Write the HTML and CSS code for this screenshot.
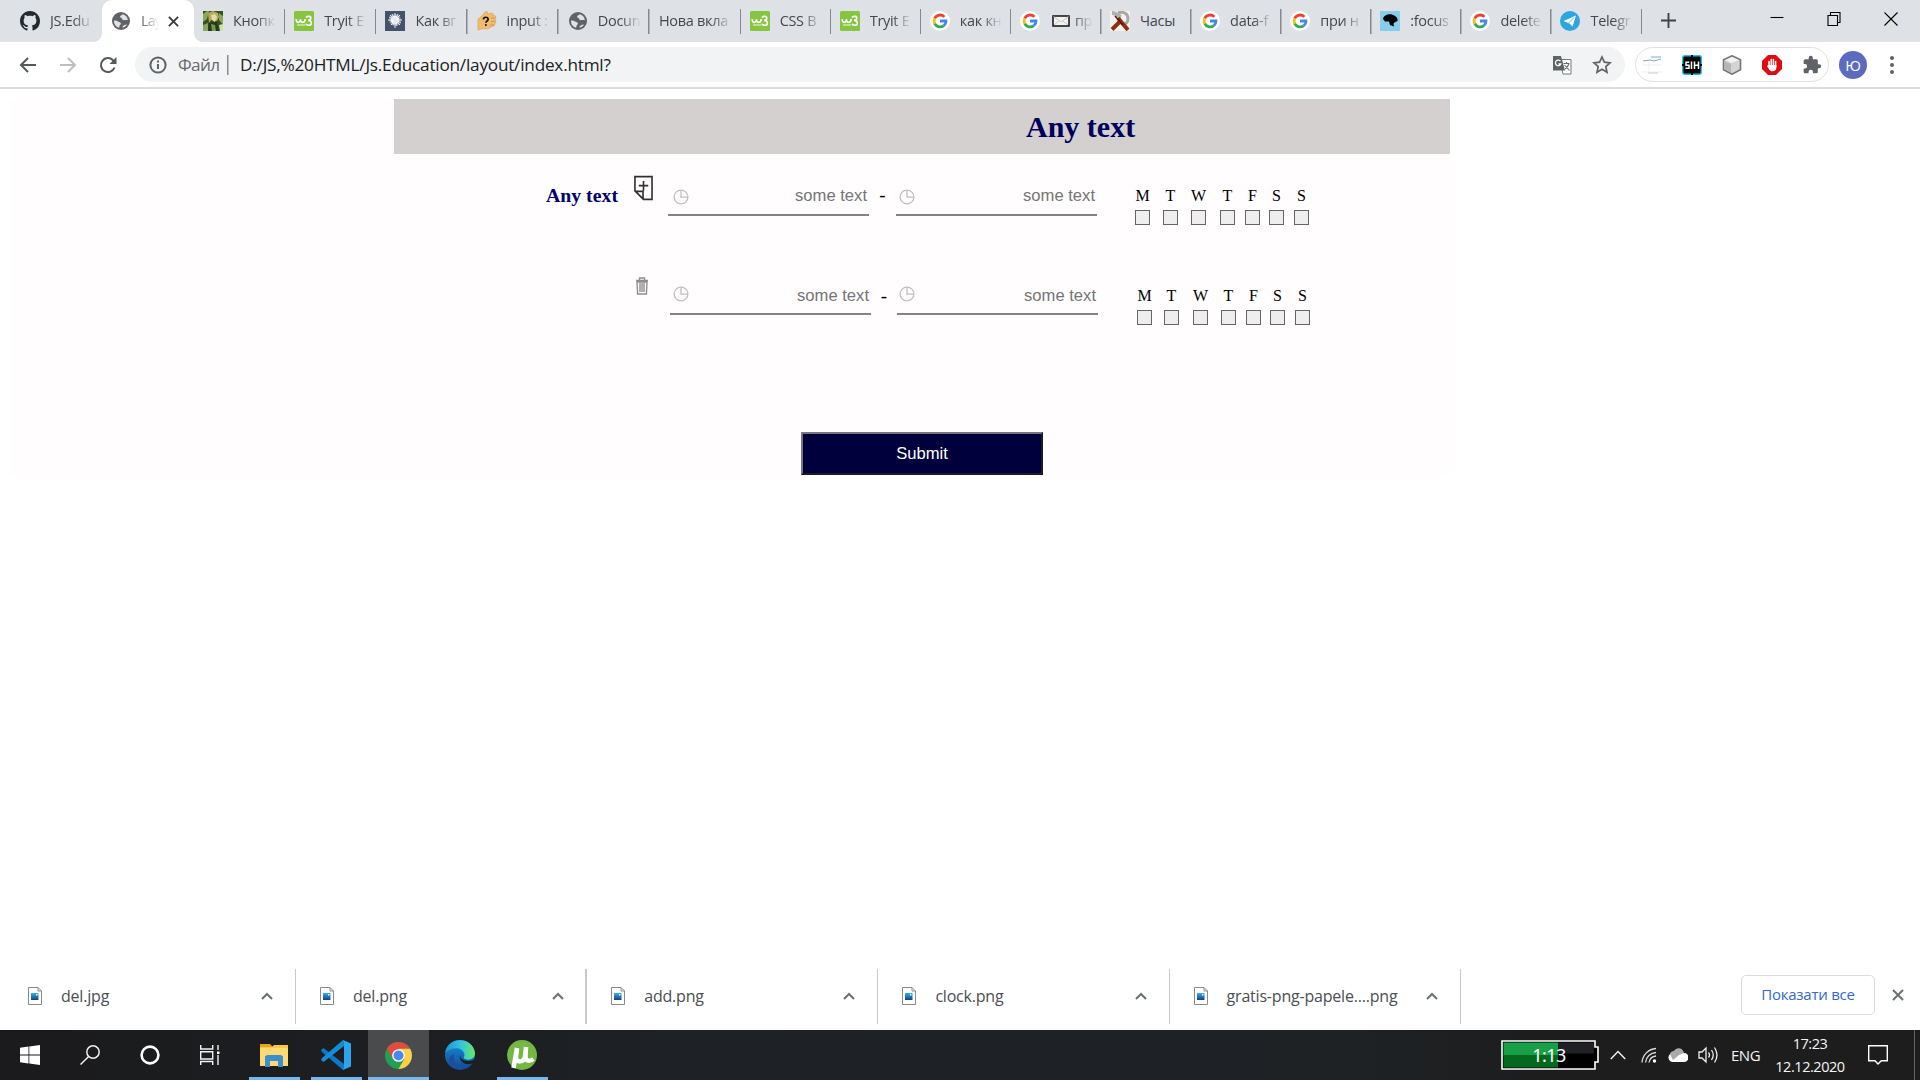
FILE: index.html
```html
<!DOCTYPE html>
<html lang="uk">
<head>
<meta charset="utf-8">
<title>Layout</title>
<link rel="stylesheet" href="styles.css">
</head>
<body>
<svg class="defs" aria-hidden="true">
  <defs>
    <linearGradient id="edgeA" x1="0" y1="0" x2="1" y2="0"><stop offset="0" stop-color="#1797d8"/><stop offset=".55" stop-color="#35c5dc"/><stop offset="1" stop-color="#66eb5c"/></linearGradient>
    <linearGradient id="edgeB" x1="0" y1="0" x2="0" y2="1"><stop offset="0" stop-color="#178fdf"/><stop offset="1" stop-color="#124a92"/></linearGradient>
    <linearGradient id="pic" x1="0" y1="0" x2="0" y2="1"><stop offset="0" stop-color="#36b0ea"/><stop offset="1" stop-color="#12407e"/></linearGradient>
  </defs>
  <symbol id="github" viewBox="0 0 16 16"><path fill="#24292e" d="M8 0C3.58 0 0 3.58 0 8c0 3.54 2.29 6.53 5.47 7.59.4.07.55-.17.55-.38 0-.19-.01-.82-.01-1.49-2.01.37-2.53-.49-2.69-.94-.09-.23-.48-.94-.82-1.13-.28-.15-.68-.52-.01-.53.63-.01 1.08.58 1.23.82.72 1.21 1.87.87 2.33.66.07-.52.28-.87.51-1.07-1.78-.2-3.64-.89-3.64-3.95 0-.87.31-1.59.82-2.15-.08-.2-.36-1.02.08-2.12 0 0 .67-.21 2.2.82.64-.18 1.32-.27 2-.27s1.36.09 2 .27c1.53-1.04 2.2-.82 2.2-.82.44 1.1.16 1.92.08 2.12.51.56.82 1.27.82 2.15 0 3.07-1.87 3.75-3.65 3.95.29.25.54.73.54 1.48 0 1.07-.01 1.93-.01 2.2 0 .21.15.46.55.38A8 8 0 0 0 16 8c0-4.42-3.58-8-8-8z"/></symbol>
  <symbol id="globe" viewBox="0 0 20 20"><circle cx="10" cy="10" r="9" fill="#5f6368"/><path fill="#dfe2e6" d="M11.500 3.200c-.5 1.200-2 1-2.400 2.400-.3 1.200 1 1.200 1.600 1.600.9.600.2 1.700 1.500 1.900 1.200.2 2.500-.6 4.600.2a7 7 0 0 0-5.300-6.100zM3 9.500c1.500 0 3 .2 4.200 1 1 .7 2.600.8 2.700 2 .1 1.400-1.200 1-1.300 2.300 0 .8-.2 1.400-.6 1.900A7.100 7.100 0 0 1 3 9.500zM11.500 15.500c.9-1.600 3-1.500 3.900-2.300l.4.900a7 7 0 0 1-4 2.700z"/></symbol>
  <symbol id="photo" viewBox="0 0 20 20"><path fill="#31541f" d="M0 0h20v20H0z"/><path fill="#8ca75a" d="M0 3l4-3h2L4 8 0 11zM16 2l4 3v9l-4-5zM0 14l5-2v8H0z"/><path fill="#b5aa60" d="M5 2l5-2 5 2 1 4-2 4-6-1-2 3z"/><path fill="#ead9a4" d="M8 4l4-1 2 3-2 5-3-2z"/><path fill="#26371c" d="M6 12l8-1 2 9H5z"/><path fill="#779650" d="M8 13l4 1 1 6H9z"/><path fill="#cee39c" d="M16 14l4-1v7h-3z"/></symbol>
  <symbol id="w3" viewBox="0 0 20 20"><rect width="20" height="20" rx="1.500" fill="#87c540"/><path fill="none" stroke="#fff" stroke-width="1.600" d="M2.200 8c0 4.500 4 4.500 4.300.3 0 4.200 4.500 4.200 4.700-.3M12 6.500c1-1.700 5-1.600 4.800.8-.1 1.500-1.500 2.100-2.800 2.100 2 0 3.500.8 3.400 2.700-.2 2.900-4.600 2.700-5.400.6"/><path stroke="#d9eec1" stroke-width="1.300" d="M3 14h8"/></symbol>
  <symbol id="burst" viewBox="0 0 20 20"><path fill="#46516a" d="M0 0h20v20H0z"/><circle cx="10" cy="9" r="6" fill="#8993a6"/><circle cx="10" cy="9" r="4.300" fill="#fff"/><path fill="none" stroke="#e4e8ef" stroke-width="1" d="M10 2v15M3 9h14M5 4l10 10M15 4L6 14M7 3l5 12M13 3L8 14M4 6l12 6"/></symbol>
  <symbol id="fist" viewBox="0 0 20 20"><path fill="#f0bd70" stroke="#d99a42" stroke-width=".6" d="M1 8l4-3 3-4c2-1 3 0 2.500 2l4-1c2 .2 2 1.500 1 2.200l2 .3c2 .5 1.500 2.500.3 2.700 1.700.8 1.500 2.500 0 2.800 1.500 1 1 2.500-.3 2.700.6 2-.5 2.500-2 2.500l-5 2.800-5-.5-4.500 1.500z"/><path fill="none" stroke="#17110a" stroke-width="1.700" d="M6.500 8.500c0-3 4.600-3 4.600 0 0 1.600-2.200 1.500-2.200 3.300"/><circle cx="8.900" cy="14" r="1" fill="#17110a"/><path stroke="#d1984b" d="M14 7h4M14 10.500h4M13 14h4"/></symbol>
  <symbol id="google" viewBox="0 0 20 20"><circle cx="10" cy="10" r="10" fill="#fff"/><g fill="none" stroke-width="2.800"><path stroke="#ea4335" d="M4.700 7.300A6 6 0 0 1 14.400 5.900"/><path stroke="#fbbc05" d="M4.700 12.700A6 6 0 0 1 4.700 7.300"/><path stroke="#34a853" d="M13.800 14.600A6 6 0 0 1 4.700 12.700"/><path stroke="#4285f4" d="M10 10h6c0 2-.8 3.600-2.200 4.600"/></g></symbol>
  <symbol id="tools" viewBox="0 0 20 20"><path fill="#f4f2f0" d="M0 0h20v20H0z"/><path fill="none" stroke="#b0b0b0" stroke-width="4" d="M2 2c5 0 6 3 9 4"/><path fill="none" stroke="#a7a7a7" stroke-width="3" d="M8 1.500c6-1 10 1 10 6 0 4-2 6-6 5"/><path stroke="#8f330f" stroke-width="4" d="M2 18.500l8-8M18 19L8 7"/><path stroke="#4d1a08" stroke-width="1.500" d="M5 5l8 9"/></symbol>
  <symbol id="bird" viewBox="0 0 20 20"><path fill="#87ceeb" d="M0 0h20v20H0z"/><path d="M3 8c1-5 8-6 12-3 2 1 3 3 2.500 5l-3 1.500-1 1 .5 3-4-1.500-1-3.500H5z"/></symbol>
  <symbol id="telegram" viewBox="0 0 20 20"><circle cx="10" cy="10" r="10" fill="#2ca5e0"/><path fill="#fff" d="M3.500 10L16 4.500 12.500 15.500 9.500 12.500z"/><path stroke="#2ca5e0" stroke-width=".8" d="M8.500 12L14 6.500"/></symbol>
  <symbol id="imgfile" viewBox="0 0 14 18"><path fill="#fff" stroke="#8b8b8b" d="M.5.500h9.500l3.500 3.500v13.500H.5zM10 .5V4h3.500"/><path fill="url(#pic)" d="M3 6h7.500v7H3z"/><path fill="#e4f8ff" d="M8 7h1.500v1.500H8z"/></symbol>
  <symbol id="up" viewBox="0 0 12 8"><path fill="none" stroke="#6c6f73" stroke-width="2" d="M1 7l5-5 5 5"/></symbol>
  <symbol id="clock" viewBox="0 0 16 16"><circle cx="8" cy="8" r="6.900" fill="none" stroke="#c0c0c0" stroke-width="1.300"/><path fill="none" stroke="#c0c0c0" stroke-width="1.300" d="M8 1v7.200h7"/></symbol>
</svg>

<header class="tabs">
  <div class="tab first"><svg class="fav"><use href="#github"/></svg><span>JS.Edu</span></div>
  <div class="tab active"><svg class="fav"><use href="#globe"/></svg><span>Lay</span><svg class="close" viewBox="0 0 12 12"><path d="M1 1l10 10M11 1L1 11"/></svg></div>
  <div class="tab"><svg class="fav"><use href="#photo"/></svg><span>Кнопк</span></div>
  <div class="tab"><svg class="fav"><use href="#w3"/></svg><span>Tryit E</span></div>
  <div class="tab"><svg class="fav"><use href="#burst"/></svg><span>Как вг</span></div>
  <div class="tab"><svg class="fav"><use href="#fist"/></svg><span>input :</span></div>
  <div class="tab"><svg class="fav"><use href="#globe"/></svg><span>Docun</span></div>
  <div class="tab"><span>Нова вкла</span></div>
  <div class="tab narrow"><svg class="fav"><use href="#w3"/></svg><span>CSS B</span></div>
  <div class="tab narrow"><svg class="fav"><use href="#w3"/></svg><span>Tryit E</span></div>
  <div class="tab narrow"><svg class="fav"><use href="#google"/></svg><span>как кн</span></div>
  <div class="tab narrow"><svg class="fav"><use href="#google"/></svg><svg class="mail" viewBox="0 0 18 12"><path d="M1 1h16v10H1z" fill="#f2f2f2" stroke="#111" stroke-width="1.500"/><path d="M1.500 1.500L9 7l7.500-5.500M2 10l5-4m9 4l-5-4" fill="none" stroke="#c7c7c7"/></svg><span>пр</span></div>
  <div class="tab narrow"><svg class="fav"><use href="#tools"/></svg><span class="whole">Часы</span></div>
  <div class="tab narrow"><svg class="fav"><use href="#google"/></svg><span>data-f</span></div>
  <div class="tab narrow"><svg class="fav"><use href="#google"/></svg><span>при н</span></div>
  <div class="tab narrow"><svg class="fav"><use href="#bird"/></svg><span>:focus</span></div>
  <div class="tab narrow"><svg class="fav"><use href="#google"/></svg><span>delete</span></div>
  <div class="tab narrow"><svg class="fav"><use href="#telegram"/></svg><span>Telegr</span></div>
  <svg class="plus" viewBox="0 0 16 16"><path d="M8 0v16M0 8h16"/></svg>
  <div class="window-buttons">
    <svg viewBox="0 0 14 14"><path d="M.5 5.500h13"/></svg>
    <svg viewBox="0 0 14 14"><path d="M1 3.500h9.500v10H1zM3.500 3.500v-3h9.500v10h-2.500"/></svg>
    <svg viewBox="0 0 14 14"><path d="M.5.500l13 13M13.500.500l-13 13"/></svg>
  </div>
</header>

<nav class="toolbar">
  <svg class="nav-icon" viewBox="0 0 18 18"><path d="M17 9H2M9 2L2 9l7 7"/></svg>
  <svg class="nav-icon off" viewBox="0 0 18 18"><path d="M1 9h15M9 2l7 7-7 7"/></svg>
  <svg class="nav-icon" viewBox="0 0 18 18"><path d="M15.500 11.500A7 7 0 1 1 14 4.200L16 6"/><path class="solid" d="M17.500 1v7h-7z"/></svg>
  <div class="omnibox">
    <svg class="info" viewBox="0 0 18 18"><circle cx="9" cy="9" r="7.600"/><path d="M9 8v5M9 4.500v2"/></svg>
    <span class="scheme">Файл</span>
    <span class="url">D:/JS,%20HTML/Js.Education/layout/index.html?</span>
    <svg class="translate" viewBox="0 0 20 20"><path fill="#fff" stroke="#777a7e" d="M8 4.500h11v14.500h-8z"/><path fill="#5f6368" d="M1 1h8l4 14.500H1z"/><path fill="none" stroke="#fff" stroke-width="1.300" d="M8.500 6.200a2.800 2.800 0 1 0 .3 2.800H6.500"/><path fill="none" stroke="#6a6d71" stroke-width="1.100" d="M11.500 8.500h6M14.500 7v1.500M17 8.500c-.6 2.500-2 4-4 5.500M12.500 10l5 5.500"/></svg>
    <svg class="star" viewBox="0 0 20 20"><path d="M10 2l2.400 5.200 5.600.6-4.200 3.800 1.200 5.600-5-2.900-5 2.900 1.200-5.600L2 7.800l5.600-.6z"/></svg>
  </div>
  <div class="extensions">
    <svg viewBox="0 0 20 20"><path d="M9 2h10M1 6l7-1 4 1 7-2" stroke="#82abc9" fill="none"/><path d="M0 10h20M0 17h20M7 7v11" stroke="#eceff1" fill="none"/><path d="M6 18h10" stroke="#ccc"/></svg>
    <svg viewBox="0 0 20 20"><rect x=".7" y=".7" width="18.600" height="18.600" rx="2" fill="#050505" stroke="#26bfe6" stroke-width="1.400"/><path d="M0 10h20M10 0v20" stroke="#050505" stroke-width="2"/><path d="M7.200 7.200H4v3h3v3H3.500M9.500 6.500V14M12.500 6.500V14M16.500 6.500V14M12.500 10.200h4" stroke="#fff" stroke-width="1.500" fill="none"/></svg>
    <svg viewBox="0 0 20 20"><path d="M10 .8l8.500 4v10L10 19.200l-8.500-4.400v-10z" fill="#d4d4d4" stroke="#777" stroke-width="1.600"/><path d="M3 6.500L9 9v8.500l-6-3.300z" fill="#b5b5b5"/><path d="M3.500 5L10 2l6.500 3L9.500 8z" fill="#f4f4f4"/></svg>
    <svg viewBox="0 0 20 20"><path d="M6 0h8l6 6v8l-6 6H6l-6-6V6z" fill="#df0b12"/><path d="M7 12V6.500M9.200 11V4.500M11.400 11V4.500M13.600 12V6.500" stroke="#fff" stroke-width="1.500" stroke-linecap="round"/><path d="M6.300 10h8V13c0 3.500-5.500 4.500-7.200 1.500L5 11z" fill="#fff"/></svg>
    <svg viewBox="0 0 24 24"><path fill="#5f6368" d="M20.500 11H19V7c0-1.100-.9-2-2-2h-4V3.500a2.500 2.500 0 0 0-5 0V5H4c-1.100 0-2 .9-2 2v3.800h1.500a2.700 2.700 0 0 1 0 5.400H2V20c0 1.100.9 2 2 2h3.800v-1.500a2.700 2.700 0 0 1 5.400 0V22H17c1.100 0 2-.9 2-2v-4h1.500a2.500 2.500 0 0 0 0-5z"/></svg>
  </div>
  <span class="avatar">Ю</span>
  <svg class="dots" viewBox="0 0 6 20"><circle cx="3" cy="3" r="2"/><circle cx="3" cy="10" r="2"/><circle cx="3" cy="17" r="2"/></svg>
</nav>

<main class="page">
  <form class="content">
    <h1>Any text</h1>
    <div class="row">
      <b class="label">Any text</b>
      <svg class="add" viewBox="0 0 20 26"><path d="M1 1h18v24h-9l-9-9zM1 16.500h8.500V25M10 5.500v10M5 10.500h10"/></svg>
      <div class="field"><svg><use href="#clock"/></svg><span>some text</span></div>
      <span class="dash">-</span>
      <div class="field end"><svg><use href="#clock"/></svg><span>some text</span></div>
      <div class="days"><label>M<i></i></label><label>T<i></i></label><label>W<i></i></label><label>T<i></i></label><label>F<i></i></label><label>S<i></i></label><label>S<i></i></label></div>
    </div>
    <div class="row second">
      <b class="label"></b>
      <svg class="trash" viewBox="0 0 14 18"><path d="M1 3.500h12M4.500 3V1h5v2M2 5l.6 12h8.800L12 5zM5 6v9M7 6v9M9 6v9"/></svg>
      <div class="field"><svg><use href="#clock"/></svg><span>some text</span></div>
      <span class="dash">-</span>
      <div class="field end"><svg><use href="#clock"/></svg><span>some text</span></div>
      <div class="days"><label>M<i></i></label><label>T<i></i></label><label>W<i></i></label><label>T<i></i></label><label>F<i></i></label><label>S<i></i></label><label>S<i></i></label></div>
    </div>
    <button class="submit" type="button">Submit</button>
  </form>
</main>

<section class="downloads">
  <div class="file"><svg class="doc"><use href="#imgfile"/></svg><span>del.jpg</span><svg class="up"><use href="#up"/></svg></div>
  <div class="file thick"><svg class="doc"><use href="#imgfile"/></svg><span>del.png</span><svg class="up"><use href="#up"/></svg></div>
  <div class="file"><svg class="doc"><use href="#imgfile"/></svg><span>add.png</span><svg class="up"><use href="#up"/></svg></div>
  <div class="file"><svg class="doc"><use href="#imgfile"/></svg><span>clock.png</span><svg class="up"><use href="#up"/></svg></div>
  <div class="file"><svg class="doc"><use href="#imgfile"/></svg><span>gratis-png-papele....png</span><svg class="up"><use href="#up"/></svg></div>
  <button class="show-all" type="button">Показати все</button>
  <svg class="dismiss" viewBox="0 0 12 12"><path d="M1 1l10 10M11 1L1 11"/></svg>
</section>

<footer class="taskbar">
  <div class="task"><svg viewBox="0 0 20 20" width="20" height="20"><path fill="#fff" d="M0 2.800l8.500-1.200v8H0zM9.300 1.500L20 0v9.600H9.300zM0 10.400h8.500v8L0 17.200zM9.300 10.400H20V20L9.300 18.500z"/></svg></div>
  <div class="task"><svg viewBox="0 0 20 20" width="20" height="20"><g fill="none" stroke="#eee" stroke-width="1.500"><circle cx="13" cy="7" r="6.200"/><path d="M8.600 11.500L.5 19.500"/></g></svg></div>
  <div class="task"><svg viewBox="0 0 20 20" width="20" height="20"><circle cx="10" cy="10" r="8.400" fill="none" stroke="#fff" stroke-width="2.600"/></svg></div>
  <div class="task"><svg viewBox="0 0 20 20" width="20" height="20"><path fill="none" stroke="#f2f2f2" stroke-width="1.400" d="M.7 0v4h12V0M.7 6.700h12v7.300H.7zM.7 20v-3.500h12V20M18 0v5M18 10v10"/><path fill="#fff" d="M17 6.500h2.500v2.500H17z"/></svg></div>
  <div class="task on files"><svg viewBox="0 0 28 24" width="28" height="24"><path fill="#e2a81d" d="M0 1h10l3 3h15v4H0z"/><path fill="#ffda72" d="M0 4h28v19H0z"/><path fill="#f7c64b" d="M0 4h12l2-2h14v3H0z"/><path fill="#3a90cf" d="M5 13.500l2-1.500h14l2 1.500V24h-5v-6h-8v6H5z"/></svg></div>
  <div class="task on code"><svg viewBox="0 0 30 30" width="30" height="30"><path fill="#0a79c9" d="M0 10l2.500-2L23 24l-1 6L1 12z"/><path fill="#168bd6" d="M0 20l2.500 2L23 6l-1-6L1 18z"/><path fill="#29a6ef" d="M22 0l8 3.500v23L22 30l1-6V6z"/></svg></div>
  <div class="task on chrome"><svg viewBox="0 0 28 28" width="27" height="27"><circle cx="14" cy="14" r="14" fill="#20a052"/><path fill="#df4b3d" d="M1.900 7A14 14 0 0 1 26.100 7H14l-6.100 10.500z"/><path fill="#fdd04b" d="M26.100 7A14 14 0 0 1 14 28l6-10.500L14 7z"/><circle cx="14" cy="14" r="6.600" fill="#fff"/><circle cx="14" cy="14" r="5.200" fill="#4b87f0"/></svg></div>
  <div class="task edge"><svg viewBox="0 0 30 30" width="30" height="30"><circle cx="15" cy="15" r="15" fill="url(#edgeB)"/><path fill="url(#edgeA)" d="M.2 13C2-4 28-4 30 13c.3 5-5 8-10 6-2-.8-1-2-.5-4C19 7 7 6 .2 13z"/><path fill="#1b4f9d" d="M9 14c-2 8 5 14 15 11-6 7-19 6-20-5 0-3 2-5 5-6z"/><path fill="#1e1f22" d="M15.500 13c-2 5 3 10 13 7l1.500-2v4l-2 1.500c-8.500 3-15.500-3-12.500-10.500z"/></svg></div>
  <div class="task on torrent"><svg viewBox="0 0 30 30" width="30" height="30"><circle cx="15" cy="15" r="15" fill="#74b843"/><path fill="none" stroke="#fff" stroke-width="4.500" d="M6.500 28L10 8M10 9l-1 8c0 6 8 6 9-1l1-9M19 7l-.5 10c.5 5 5 4 8 2"/></svg></div>
  <div class="tray">
    <svg class="battery" viewBox="0 0 98 30"><path d="M1 1h93v6h3v15h-3v7H1z" fill="#000" stroke="#fff" stroke-width="1.600"/><path fill="#17a045" d="M2.500 2.500H57v13H2.500z"/><path fill="#04681f" d="M2.500 15H57v12.500H2.500z"/><path fill="#202124" d="M57 2.500h36v11H57z"/><text x="48" y="22">1:13</text></svg>
    <svg class="chev" viewBox="0 0 16 10"><path d="M.8 9L8 1.500 15.200 9"/></svg>
    <svg class="wifi" viewBox="0 0 16 16"><path d="M1 15.500A15 15 0 0 1 15 1.500M4.500 15.500A11 11 0 0 1 15 5.500M8 15.500A8 8 0 0 1 15 9"/><circle cx="13.500" cy="14" r="1.700"/></svg>
    <svg class="cloud" viewBox="0 0 20 14"><path fill="#fff" d="M5 14a4.500 4.500 0 0 1 0-9h11a4.500 4.500 0 0 1 0 9z"/><path fill="#aaa" d="M2 6C3 3 5 3 6 3c2-4 9-4 10 2l-5 2-6 5z"/></svg>
    <svg class="sound" viewBox="0 0 20 18"><path d="M1 6h3l4-4v14l-4-4H1zM10.500 6.500q2 2.500 0 5M13.500 4q3.500 5 0 10M16.500 1.500q5 7.500 0 15"/></svg>
    <span class="lang">ENG</span>
    <div class="time"><span>17:23</span><span>12.12.2020</span></div>
    <svg class="note" viewBox="0 0 20 20"><path d="M.7.700h18.600v15h-6L10 19l-3-3.300H.7z"/></svg>
  </div>
</footer>
</body>
</html>
```
FILE: styles.css
```css
* { box-sizing: border-box; }
body {
  margin: 0;
  width: 1920px;
  height: 1080px;
  overflow: hidden;
  display: flex;
  flex-direction: column;
  background: #fff;
  font-family: "Open Sans", "Noto Sans", sans-serif;
}
svg { display: block; flex: none; }
.defs { position: absolute; width: 0; height: 0; }

/* Tab strip */
.tabs { display: flex; height: 42px; flex: none; background: #dee1e6; }
.tab {
  display: flex;
  align-items: center;
  width: 91.2px;
  flex: none;
  padding: 0 9px;
  font-size: 14.5px;
  letter-spacing: -0.3px;
  color: #45484c;
  background: linear-gradient(#85888c, #85888c) right 9px / 1.500px 25px no-repeat;
}
.tab.narrow { width: 90.1px; padding-left: 8.500px; }
.tab.first { width: 102px; padding-left: 20px; background: none; }
.tab.active {
  width: 92px;
  padding-left: 9px;
  background: #fff;
  border-radius: 10px 10px 0 0;
  position: relative;
}
.tab.active::before, .tab.active::after {
  content: "";
  position: absolute;
  bottom: 0;
  width: 8px;
  height: 8px;
  left: -8px;
  background: radial-gradient(circle at 0 0, #dee1e6 7.500px, #fff 8px);
}
.tab.active::after {
  left: auto;
  right: -8px;
  background: radial-gradient(circle at 100% 0, #dee1e6 7.500px, #fff 8px);
}
.tab span {
  flex: 1;
  min-width: 0;
  overflow: hidden;
  white-space: nowrap;
  margin-top: -2px;
  -webkit-mask-image: linear-gradient(90deg, #000 calc(100% - 20px), transparent);
  mask-image: linear-gradient(90deg, #000 calc(100% - 20px), transparent);
}
.tab .whole { -webkit-mask-image: none; mask-image: none; }
.tab.active span { letter-spacing: -0.8px; }
.fav { width: 20px; height: 20px; margin-right: 10px; }
.mail { width: 18px; height: 12px; margin: 0 5px 0 2px; }
.close { width: 11px; height: 11px; margin-left: 9px; margin-right: 6px; fill: none; stroke: #36383b; stroke-width: 2; }
.plus { width: 15px; height: 15px; margin: 13px 0 0 19px; fill: none; stroke: #3f4246; stroke-width: 2; }
.window-buttons { display: flex; gap: 43px; margin: 12px 0 0 auto; padding-right: 22px; }
.window-buttons svg { width: 14px; height: 14px; fill: none; stroke: #000; stroke-width: 1.100; }

/* Toolbar */
.toolbar {
  display: flex;
  align-items: center;
  flex: none;
  height: 47px;
  padding: 0 23px 0 19px;
  border-bottom: 2px solid #dcdcdc;
}
.nav-icon { width: 18px; height: 18px; margin-right: 22px; fill: none; stroke: #54575b; stroke-width: 2; }
.nav-icon.off { stroke: #bcbec1; }
.nav-icon + .omnibox { margin-left: -4px; }
.nav-icon .solid { fill: #54575b; stroke: none; }
.omnibox {
  display: flex;
  align-items: center;
  width: 1490px;
  height: 35px;
  border-radius: 18px;
  background: #f1f3f4;
  padding: 0 13px 0 14px;
  font-size: 17.200px;
}
.info { width: 18px; height: 18px; fill: none; stroke: #5f6368; stroke-width: 2; }
.scheme { width: 67px; margin-left: 11px; color: #66696e; letter-spacing: -0.600px; background: linear-gradient(#888b8f, #888b8f) 49px 2px / 1.500px 20px no-repeat; }
.url { margin-right: auto; margin-left: -5px; color: #202124; letter-spacing: -0.220px; }
.translate { width: 20px; height: 20px; margin-right: 20px; }
.star { width: 20px; height: 20px; fill: none; stroke: #5f6368; stroke-width: 1.700; }
.extensions {
  display: flex;
  align-items: center;
  gap: 20px;
  width: 194px;
  height: 35px;
  margin-left: 10px;
  padding-left: 6px;
  border: 1.500px solid #dfe1e3;
  border-radius: 18px;
}
.extensions svg { width: 20px; height: 20px; }
.avatar {
  width: 28px;
  height: 28px;
  margin-left: 10px;
  border-radius: 50%;
  background: #5c6bc0;
  color: #fff;
  font-size: 15px;
  line-height: 28px;
  text-align: center;
}
.dots { width: 6px; height: 20px; margin-left: 22px; fill: #5f6368; }

/* Page */
.page { flex: 1; padding: 10px 0 0 10px; }
.content { width: 1440px; height: 376px; background: #fffdfe; }
h1 {
  width: 1056px;
  height: 55px;
  margin: 0 0 0 384px;
  padding-left: 632px;
  background: #d3d0cf;
  color: #00005c;
  font: bold 30px/55px "Liberation Serif", serif;
}
.row { display: flex; height: 100px; padding: 22px 0 0 536px; }
.label { width: 88px; padding-top: 8px; color: #000070; font: bold 19.800px/22px "Liberation Serif", serif; }
.add { width: 20px; height: 26px; margin: -1px 14px 0 0; padding-right: 1px; fill: none; stroke: #303030; stroke-width: 1.700; }
.trash { width: 14px; height: 18px; margin: -1px 21px 0 1px; fill: none; stroke: #8e8e8e; stroke-width: 1.400; }
.field {
  display: flex;
  align-items: flex-start;
  justify-content: space-between;
  width: 201px;
  height: 40px;
  padding: 13px 2px 0 5px;
  border-bottom: 2px solid #858385;
  font: 16.600px/19px "Liberation Sans", sans-serif;
  color: #757575;
}
.field.end { padding-left: 3px; }
.field svg { width: 16px; height: 16px; }
.field span { margin-top: -3px; }
.dash { width: 27px; padding-top: 8px; text-align: center; font: 19px/22px "Liberation Serif", serif; }
.days { display: grid; grid-template-columns: 28px 28px 29px 25px 24px 25px 22px; margin-left: 38px; padding-top: 10px; height: 60px; font: 16px/20px "Liberation Serif", serif; }
.days label { display: flex; flex-direction: column; align-items: center; width: 15px; }
.days i { width: 15px; height: 15px; flex: none; margin-top: 4px; border: 1px solid #666; background: #eee; }
.second { padding-top: 24px; }
.second .label { padding: 0; }
.second .dash { width: 26px; padding-top: 7px; }
.second .field { height: 38px; margin-top: -1px; padding: 9px 2px 0 3px; }
.second .field.end { padding-left: 2px; }
.second .field span { margin-top: 0; }
.second .days { grid-template-columns: 27px 29px 28px 25px 24px 25px 22px; margin-left: 39px; padding-top: 8px; }
.submit {
  display: block;
  width: 242px;
  height: 43px;
  margin: 78px 0 0 791px;
  padding: 0;
  border: 2px solid;
  border-color: #77767c #191927 #191927 #77767c;
  background: #00003c;
  color: #fff;
  font: 16.600px "Liberation Sans", sans-serif;
}

/* Downloads */
.downloads { display: flex; align-items: center; flex: none; height: 67px; }
.file {
  display: flex;
  align-items: center;
  width: 291.200px;
  height: 55px;
  padding: 0 22px 0 24px;
  border-right: 1px solid #c9c9c9;
  font-size: 16px;
  letter-spacing: -0.200px;
  color: #4b4e52;
}
.file span { margin-top: -1px; }
.file:first-child { width: 296px; padding-left: 28px; }
.file.thick { border-right-width: 2px; padding-right: 21px; }
.doc { width: 14px; height: 18px; margin-right: 19px; margin-top: -2px; }
.up { width: 12px; height: 8px; margin-left: auto; margin-top: -2px; }
.show-all {
  width: 134px;
  height: 40px;
  margin: -4px 17px 0 auto;
  border: 1.500px solid #dadce0;
  border-radius: 5px;
  background: #fff;
  color: #3268cf;
  font: 500 15px "Open Sans", "Noto Sans", sans-serif;
  letter-spacing: -0.250px;
  padding: 0 0 2px;
}
.dismiss { width: 12px; height: 12px; margin: -3px 16px 0 0; fill: none; stroke: #6c6f73; stroke-width: 2; }

/* Taskbar */
.taskbar { display: flex; flex: none; height: 50px; background: linear-gradient(90deg, #1b1b1d, #1e2226 42%, #1e2225 70%, #1d1d1e 80%); }
.task { display: flex; align-items: center; justify-content: center; width: 60px; }
.task.on { background: linear-gradient(#78b6eb, #78b6eb) center bottom / 51px 3px no-repeat; }
.task.files, .task.code, .task.chrome, .task.edge, .task.torrent { width: 62px; }
.task.files { margin-left: 3px; }
.task.chrome { width: 61px; margin-left: 1px; background-size: 61px 3px; background-color: #4a4b4d; }
.tray { display: flex; align-items: center; margin-left: auto; width: 419px; background: linear-gradient(#666, #666) 413px 0 / 1px 50px no-repeat; }
.battery { width: 98px; height: 30px; }
.battery text { font: 18px "Noto Sans", sans-serif; fill: #fff; text-anchor: middle; letter-spacing: -0.500px; }
.chev { width: 16px; height: 10px; margin-left: 11px; fill: none; stroke: #eee; stroke-width: 1.500; }
.wifi { width: 16px; height: 16px; margin-left: 15px; fill: none; stroke: #ddd; stroke-width: 1.300; }
.wifi circle { fill: #fff; stroke: none; }
.cloud { width: 20px; height: 14px; margin-left: 11px; }
.sound { width: 20px; height: 18px; margin-left: 10px; fill: none; stroke: #eee; stroke-width: 1.300; }
.lang { width: 30px; margin-left: 13px; color: #f4f4f4; font-size: 15px; letter-spacing: -0.500px; }
.time { display: flex; flex-direction: column; align-items: center; width: 72px; margin-left: 13px; color: #f4f4f4; font-size: 14.500px; line-height: 23px; letter-spacing: -0.450px; }
.note { width: 20px; height: 20px; margin-left: 22px; fill: none; stroke: #fff; stroke-width: 1.400; }
```
